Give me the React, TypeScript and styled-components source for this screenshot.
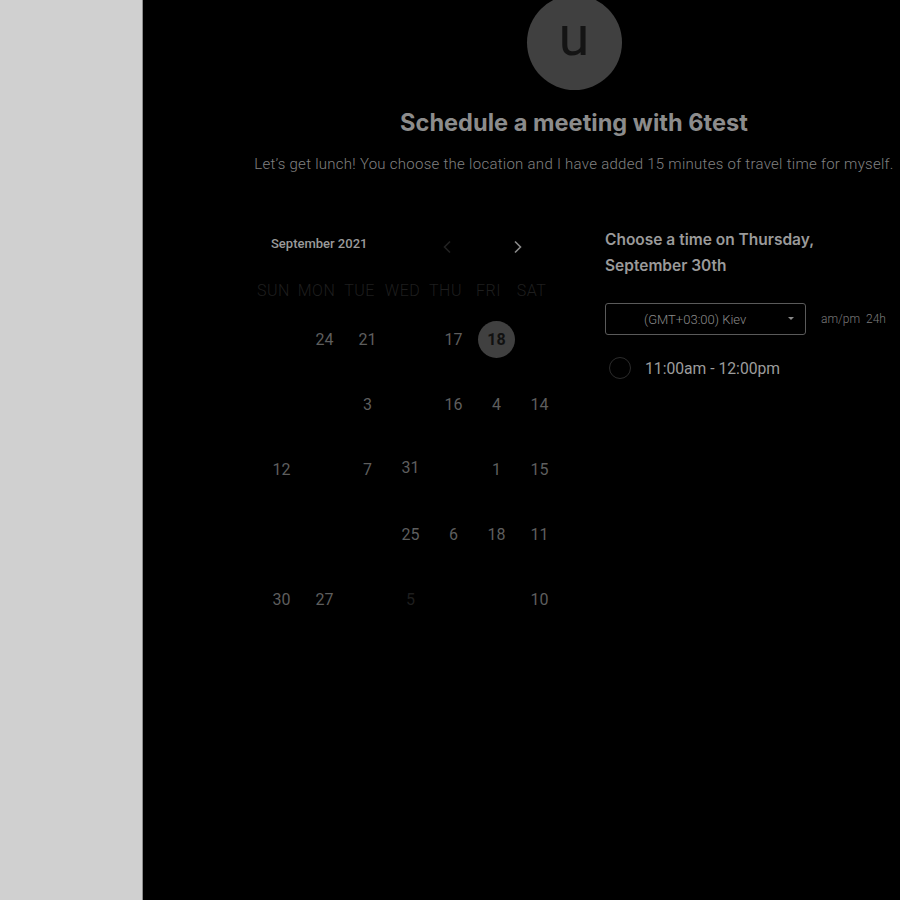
import React from 'react';
import styled, { createGlobalStyle } from 'styled-components';

const GlobalStyle = createGlobalStyle`
  html, body {
    margin: 0;
    padding: 0;
    background: #000;
  }
  * {
    box-sizing: border-box;
  }
`;

type Day = { n?: number; dim?: boolean; selected?: boolean; raised?: boolean };

const weeks: Day[][] = [
  [{}, { n: 24 }, { n: 21 }, {}, { n: 17 }, { n: 18, selected: true }, {}],
  [{}, {}, { n: 3 }, {}, { n: 16 }, { n: 4 }, { n: 14 }],
  [{ n: 12 }, {}, { n: 7 }, { n: 31, raised: true }, {}, { n: 1 }, { n: 15 }],
  [{}, {}, {}, { n: 25 }, { n: 6 }, { n: 18 }, { n: 11 }],
  [{ n: 30 }, { n: 27 }, {}, { n: 5, dim: true }, {}, {}, { n: 10 }],
];

const weekdays = ['SUN', 'MON', 'TUE', 'WED', 'THU', 'FRI', 'SAT'];

const App: React.FC = () => {
  return (
    <>
      <GlobalStyle />
      <Page>
        <Sidebar />
        <Main>
          <Content>
            <Avatar>u</Avatar>
            <Title>Schedule a meeting with 6test</Title>
            <Subtitle>
              Let’s get lunch! You choose the location and I have added 15 minutes of travel time for myself.
            </Subtitle>
            <Booking>
              <Calendar>
                <CalendarHeader>
                  <MonthLabel>September 2021</MonthLabel>
                  <Arrows>
                    <Arrow faded>
                      <svg width="10" height="14" viewBox="0 0 10 14" fill="none">
                        <path d="M8 1.5L2.5 7L8 12.5" stroke="currentColor" strokeWidth="1.6" />
                      </svg>
                    </Arrow>
                    <Arrow>
                      <svg width="10" height="14" viewBox="0 0 10 14" fill="none">
                        <path d="M2 1.5L7.5 7L2 12.5" stroke="currentColor" strokeWidth="1.6" />
                      </svg>
                    </Arrow>
                  </Arrows>
                </CalendarHeader>
                <Grid>
                  {weekdays.map((w) => (
                    <Weekday key={w}>{w}</Weekday>
                  ))}
                  {weeks.flat().map((d, i) => (
                    <Cell key={i}>
                      {d.n !== undefined &&
                        (d.selected ? (
                          <Selected>{d.n}</Selected>
                        ) : (
                          <DayNumber dim={d.dim} raised={d.raised}>
                            {d.n}
                          </DayNumber>
                        ))}
                    </Cell>
                  ))}
                </Grid>
              </Calendar>
              <TimePanel>
                <TimeHeading>
                  Choose a time on Thursday,
                  <br />
                  September 30th
                </TimeHeading>
                <ZoneRow>
                  <ZoneSelect>
                    <ZoneText>(GMT+03:00) Kiev</ZoneText>
                    <Caret />
                  </ZoneSelect>
                  <FormatToggle>am/pm&nbsp;&nbsp;24h</FormatToggle>
                </ZoneRow>
                <Slot>
                  <Radio />
                  <SlotText>11:00am - 12:00pm</SlotText>
                </Slot>
              </TimePanel>
            </Booking>
          </Content>
        </Main>
      </Page>
    </>
  );
};

export default App;

const Page = styled.div`
  display: flex;
  height: 100vh;
  overflow: hidden;
`;

const Sidebar = styled.aside`
  width: 143px;
  flex-shrink: 0;
  background: #d0d0d0;
  border-right: 1px solid #8c8c8c;
`;

const Main = styled.main`
  flex: 1;
  background: #000;
  overflow: hidden;
  padding-left: 111px;
`;

const Content = styled.div`
  width: 640px;
  display: flex;
  flex-direction: column;
  align-items: center;
`;

const Avatar = styled.div`
  width: 95px;
  height: 95px;
  margin-top: -5px;
  border-radius: 50%;
  background: #404040;
  color: #141414;
  display: flex;
  align-items: center;
  justify-content: center;
  font-family: Roboto, sans-serif;
  font-size: 56px;
  line-height: 1;
  padding-bottom: 14px;
`;

const Title = styled.h1`
  margin: 19px 0 0;
  font-family: Inter, sans-serif;
  font-weight: 700;
  font-size: 23.6px;
  line-height: 28px;
  color: #8c8c8c;
  white-space: nowrap;
`;

const Subtitle = styled.p`
  margin: 17px 0 0;
  font-family: Roboto, sans-serif;
  font-weight: 300;
  font-size: 15px;
  letter-spacing: 0.27px;
  line-height: 20px;
  color: #808080;
  white-space: nowrap;
`;

const Booking = styled.div`
  align-self: flex-start;
  display: flex;
  margin-top: 56px;
  padding-left: 6px;
  gap: 44px;
`;

const Calendar = styled.div`
  width: 301px;
`;

const CalendarHeader = styled.div`
  display: flex;
  align-items: center;
  height: 26px;
  padding-left: 11px;
`;

const MonthLabel = styled.div`
  font-family: Roboto, sans-serif;
  font-weight: 500;
  font-size: 13px;
  color: #9a9a9a;
  width: 169px;
`;

const Arrows = styled.div`
  display: flex;
  gap: 57px;
  margin-top: 8px;
`;

const Arrow = styled.span<{ faded?: boolean }>`
  display: flex;
  width: 14px;
  justify-content: center;
  color: ${(p) => (p.faded ? '#222' : '#8a8a8a')};
`;

const Grid = styled.div`
  display: grid;
  grid-template-columns: repeat(7, 43px);
  grid-template-rows: 30px;
  grid-auto-rows: 65px;
  margin-top: 26px;
`;

const Weekday = styled.div`
  display: flex;
  justify-content: center;
  font-family: Roboto, sans-serif;
  font-weight: 300;
  font-size: 16px;
  letter-spacing: 0.5px;
  color: #1e1e1e;
  line-height: 18px;
  white-space: nowrap;
  transform: translateX(-8px);
`;

const Cell = styled.div`
  display: flex;
  align-items: center;
  justify-content: center;
  margin-top: -10px;
`;

const DayNumber = styled.span<{ dim?: boolean; raised?: boolean }>`
  font-family: Roboto, sans-serif;
  font-size: 16px;
  color: ${(p) => (p.dim ? '#1e1e1e' : '#5e5e5e')};
  transform: translateY(${(p) => (p.raised ? '-2px' : '0')});
`;

const Selected = styled.span`
  width: 37px;
  height: 37px;
  border-radius: 50%;
  background: #404040;
  color: #111;
  display: flex;
  align-items: center;
  justify-content: center;
  font-family: Roboto, sans-serif;
  font-weight: 700;
  font-size: 16px;
`;

const TimePanel = styled.div`
  display: flex;
  flex-direction: column;
  margin-top: -3px;
`;

const TimeHeading = styled.h2`
  margin: 0;
  font-family: Inter, sans-serif;
  font-weight: 600;
  font-size: 15.5px;
  line-height: 26px;
  color: #9a9a9a;
  white-space: nowrap;
`;

const ZoneRow = styled.div`
  display: flex;
  align-items: center;
  gap: 15px;
  margin-top: 24px;
`;

const ZoneSelect = styled.div`
  position: relative;
  width: 201px;
  height: 32px;
  border: 1px solid #5a5a5a;
  border-radius: 3px;
  display: flex;
  align-items: center;
  padding-left: 38px;
`;

const ZoneText = styled.span`
  font-family: Roboto, sans-serif;
  font-weight: 300;
  font-size: 13px;
  color: #8a8a8a;
`;

const Caret = styled.span`
  position: absolute;
  right: 11px;
  top: 13px;
  width: 0;
  height: 0;
  border-left: 3px solid transparent;
  border-right: 3px solid transparent;
  border-top: 3px solid #8a8a8a;
`;

const FormatToggle = styled.span`
  font-family: Roboto, sans-serif;
  font-weight: 300;
  font-size: 12px;
  color: #7a7a7a;
  white-space: nowrap;
`;

const Slot = styled.div`
  display: flex;
  align-items: center;
  gap: 14px;
  margin-top: 22px;
  padding-left: 4px;
`;

const Radio = styled.span`
  width: 22px;
  height: 22px;
  border-radius: 50%;
  border: 1px solid #2c2c2c;
`;

const SlotText = styled.span`
  font-family: Roboto, sans-serif;
  font-size: 15.7px;
  color: #9c9c9c;
`;
